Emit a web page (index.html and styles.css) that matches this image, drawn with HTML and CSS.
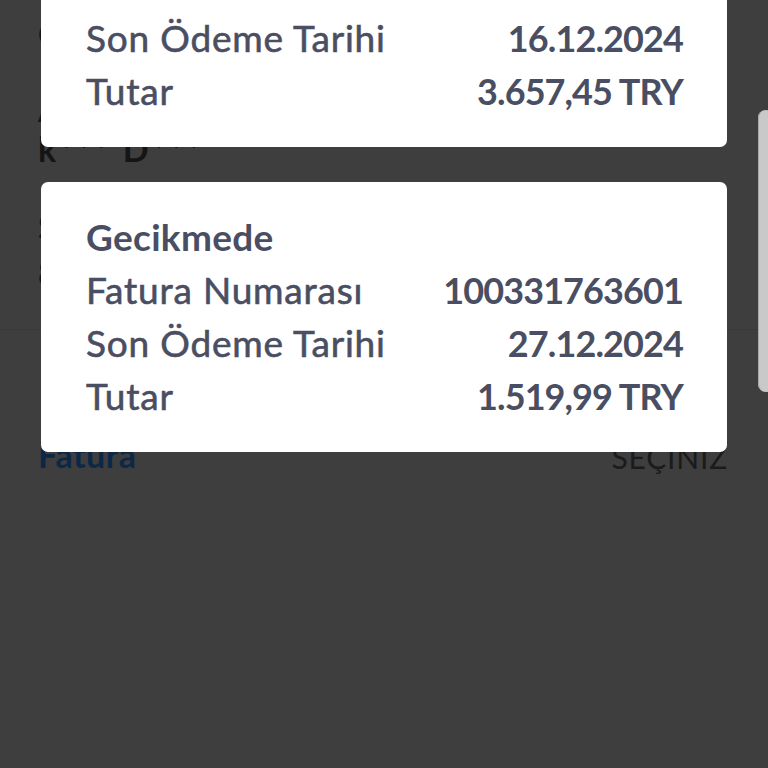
FILE: index.html
```html
<!DOCTYPE html>
<html lang="tr">
<head>
<meta charset="utf-8">
<title>Faturalar</title>
<link rel="stylesheet" href="styles.css">
</head>
<body>
<div class="page">
  <div class="under">
    <div class="u-line u-l1">Ödenmemiş</div>
    <div class="u-line u-l2">Abone</div>
    <div class="u-name">k*** D***</div>
    <div class="u-line u-l3">Sözleşme</div>
    <div class="u-line u-l4">8000</div>
    <div class="u-divider"></div>
    <div class="u-row">
      <span class="u-fatura">Fatura</span>
      <span class="u-sec">SEÇİNİZ</span>
    </div>
  </div>
  <div class="overlay">
    <div class="cards">
      <div class="card">
        <div class="row"><span class="label title">Gecikmede</span></div>
        <div class="row"><span class="label">Fatura Numarası</span><span class="value">100331763600</span></div>
        <div class="row"><span class="label">Son Ödeme Tarihi</span><span class="value">16.12.2024</span></div>
        <div class="row"><span class="label">Tutar</span><span class="value">3.657,45 TRY</span></div>
      </div>
      <div class="card">
        <div class="row"><span class="label title">Gecikmede</span></div>
        <div class="row"><span class="label">Fatura Numarası</span><span class="value">100331763601</span></div>
        <div class="row"><span class="label">Son Ödeme Tarihi</span><span class="value">27.12.2024</span></div>
        <div class="row"><span class="label">Tutar</span><span class="value">1.519,99 TRY</span></div>
      </div>
    </div>
    <div class="scrollbar"></div>
  </div>
</div>
</body>
</html>
```
FILE: styles.css
```css
html, body {
  margin: 0;
  padding: 0;
  width: 768px;
  height: 768px;
  overflow: hidden;
  background: #3e3e3e;
}
.page {
  position: relative;
  width: 768px;
  height: 768px;
  font-family: "Lato", "Noto Sans", sans-serif;
}
.under {
  display: flex;
  flex-direction: column;
  padding: 14px 40px 0 38px;
  color: #151515;
}
.u-line {
  font-size: 34px;
  font-weight: 700;
  line-height: 40px;
  height: 40px;
}
.u-l2 { margin-top: 35px; }
.u-name {
  font-size: 34px;
  font-weight: 700;
  line-height: 40px;
  letter-spacing: 3px;
}
.u-l3 { margin-top: 38px; }
.u-l4 { margin-top: 6px; }
.u-divider {
  height: 1px;
  background: #393939;
  margin: 36px -40px 0 -38px;
}
.u-row {
  display: flex;
  justify-content: space-between;
  align-items: center;
  margin-top: 104px;
  font-size: 34px;
  font-weight: 700;
}
.u-fatura { color: #0c2846; letter-spacing: 0.5px; }
.u-sec { color: #1b1b1b; font-weight: 400; font-size: 30px; margin-top: 4px; letter-spacing: 0.8px; }

.overlay {
  position: absolute;
  left: 0;
  top: 0;
  width: 768px;
  height: 768px;
  overflow: hidden;
}
.cards {
  display: flex;
  flex-direction: column;
  gap: 35px;
  margin: -123px 41px 0 41px;
}
.card {
  background: #ffffff;
  border-radius: 7px;
  padding: 28px 44px 30px 45px;
  display: flex;
  flex-direction: column;
}
.row {
  display: flex;
  justify-content: space-between;
  align-items: center;
  height: 53px;
  color: #4a4e62;
  font-size: 37px;
}
.label {
  font-weight: 400;
  letter-spacing: 0.8px;
  -webkit-text-stroke: 0.6px #4a4e62;
}
.label.title { font-weight: 700; letter-spacing: 0.3px; -webkit-text-stroke: 0; }
.value { font-weight: 700; font-size: 36px; letter-spacing: -0.9px; }
.value.wide { letter-spacing: 0; }
.scrollbar {
  position: absolute;
  left: 758px;
  top: 110px;
  width: 16px;
  height: 282px;
  border-radius: 8px;
  background: #c9c9c9;
  box-shadow: inset 1px 0 0 #a8a8a8;
}
```
